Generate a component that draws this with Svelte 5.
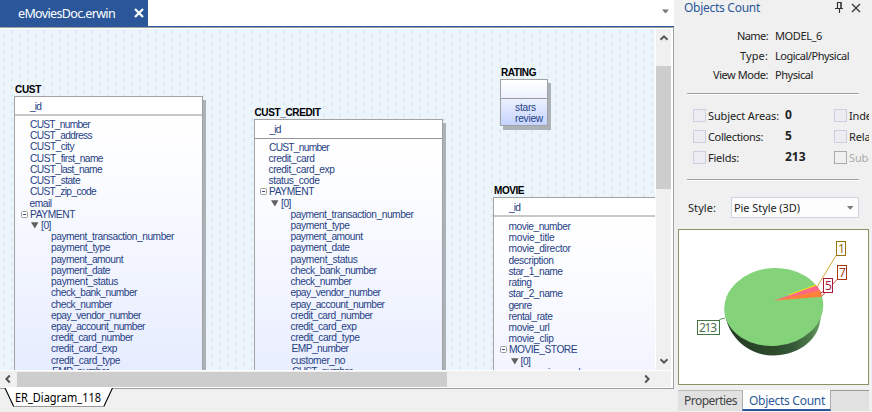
<script>
  // Tightens or loosens letter-spacing so that a label takes its intended width.
  function fit(node, width) {
    node.style.letterSpacing = '0px';
    const natural = node.getBoundingClientRect().width;
    node.style.letterSpacing = (width - natural) / node.textContent.length + 'px';
  }

  const paymentFields = [
    ['payment_transaction_number', 123],
    ['payment_type', 59],
    ['payment_amount', 72],
    ['payment_date', 59],
    ['payment_status', 67],
    ['check_bank_number', 86],
    ['check_number', 61],
    ['epay_vendor_number', 90],
    ['epay_account_number', 94],
    ['credit_card_number', 82],
    ['credit_card_exp', 66],
    ['credit_card_type', 69],
    ['EMP_number', 57, 1]
  ].map(([t, w, dx = 0]) => [t, w, 37 + dx]);

  const entities = [
    {
      name: 'CUST', nameW: 26, x: 14, y: 96, w: 189, first: 22.5, shade: '#c8c8c8', line: 2,
      rows: [
        ['CUST_number', 60, 16], ['CUST_address', 62, 16], ['CUST_city', 44, 16],
        ['CUST_first_name', 73, 16], ['CUST_last_name', 72, 16], ['CUST_state', 50, 16],
        ['CUST_zip_code', 66, 16], ['email', 22, 15.5], ['PAYMENT', 45, 16, 'box'],
        ['[0]', 10, 27, 'tri'], ...paymentFields
      ]
    },
    {
      name: 'CUST_CREDIT', nameW: 66, x: 253.5, y: 118.5, w: 189, first: 22.5, shade: '#959595', line: 1,
      rows: [
        ['CUST_number', 60, 15.5], ['credit_card', 46, 15], ['credit_card_exp', 66, 15],
        ['status_code', 51, 15], ['PAYMENT', 45, 15.5, 'box'], ['[0]', 10, 27.5, 'tri'],
        ...paymentFields, ['customer_no', 54, 37.5], ['CUST_number', 60, 38.5]
      ]
    },
    {
      name: 'MOVIE', nameW: 30, x: 493, y: 197, w: 189, first: 23.5, shade: '#c8c8c8', line: 2,
      rows: [
        ['movie_number', 62, 15.5], ['movie_title', 46, 15.5], ['movie_director', 62, 15.5],
        ['description', 45, 15.5], ['star_1_name', 54, 15.5], ['rating', 23, 15.5],
        ['star_2_name', 54, 15.5], ['genre', 23, 15.5], ['rental_rate', 44, 15.5],
        ['movie_url', 41, 15.5], ['movie_clip', 45, 15.5], ['MOVIE_STORE', 68, 16, 'box'],
        ['[0]', 10, 27.5, 'tri'], ['movie_number', 62, 37]
      ]
    }
  ];

  const info = [
    ['Name:', 31, 'MODEL_6', 47],
    ['Type:', 28, 'Logical/Physical', 74],
    ['View Mode:', 55, 'Physical', 38]
  ];
  const counts = [
    ['Subject Areas:', 71, '0', 'Indexes:', 42],
    ['Collections:', 55, '5', 'Relationships:', 71],
    ['Fields:', 31, '213', 'Sub-Types:', 54]
  ];
</script>

<div class="app">
  <div class="main">
    <div class="tabs">
      <div class="doc">
        <span class="fit" use:fit={97}>eMoviesDoc.erwin</span>
        <svg width="10" height="10" viewBox="0 0 10 10"><path d="M1 1L9 9M9 1L1 9" stroke="#fff" stroke-width="2.2" /></svg>
      </div>
      <svg class="drop" width="9" height="5"><path d="M1 .5h7L4.5 4.5z" fill="#777" /></svg>
    </div>
    <div class="frame">
      <div class="view">
        <div class="canvas">
          {#each entities as e}
            <div class="entity" style="left:{e.x}px;top:{e.y - 29}px;width:{e.w}px">
              <div class="title"><span class="fit" use:fit={e.nameW}>{e.name}</span></div>
              <div class="key" style="border-bottom:{e.line}px solid {e.shade}"><span class="fit" use:fit={11}>_id</span></div>
              <div class="rows" style="padding-top:{e.first - 19.5}px">
                {#each e.rows as [label, width, indent, mark]}
                  <div class="row" style="padding-left:{indent - 1}px">
                    {#if mark === 'box'}
                      <svg class="mark" width="7" height="7"><rect x=".5" y=".5" width="6" height="6" rx="1" fill="#fff" stroke="#9c9c9c" /><path d="M2 3.5h3" stroke="#36487c" /></svg>
                    {:else if mark === 'tri'}
                      <svg class="mark tri" width="8" height="7"><path d="M0 .2h7.4L3.9 6.6z" fill="#606060" /></svg>
                    {/if}
                    <span class="fit" use:fit={width}>{label}</span>
                  </div>
                {/each}
              </div>
            </div>
          {/each}
          <div class="entity small">
            <div class="title"><span class="fit" use:fit={35}>RATING</span></div>
            <div class="key"></div>
            <div class="rows">
              <div class="row"><span class="fit" use:fit={21}>stars</span></div>
              <div class="row"><span class="fit" use:fit={28}>review</span></div>
            </div>
          </div>
        </div>
        <div class="vbar">
          <svg width="10" height="8" viewBox="0 0 10 8"><path d="M1.5 5.8L5 2.4L8.5 5.8" fill="none" stroke="#555" stroke-width="2" /></svg>
          <div class="vthumb"></div>
          <svg width="10" height="8" viewBox="0 0 10 8"><path d="M1.5 2.2L5 5.6L8.5 2.2" fill="none" stroke="#555" stroke-width="2" /></svg>
        </div>
      </div>
      <div class="hbar">
        <svg width="8" height="10" viewBox="0 0 8 10"><path d="M5.8 1.5L2.4 5L5.8 8.5" fill="none" stroke="#555" stroke-width="2" /></svg>
        <div class="hthumb"></div>
        <svg class="right" width="8" height="10" viewBox="0 0 8 10"><path d="M2.2 1.5L5.6 5L2.2 8.5" fill="none" stroke="#555" stroke-width="2" /></svg>
      </div>
    </div>
    <div class="sheet">
      <svg width="120" height="21"><path d="M5 -1L14 18.5H103.5L112.5 -1z" fill="#fff" /><path d="M14 18.5H103.5" stroke="#999" /><path d="M5 0L13.7 18.5M112.5 0L103.8 18.5" stroke="#000" stroke-width="1.1" /><text x="15" y="13.5" textLength="86" lengthAdjust="spacingAndGlyphs">ER_Diagram_118</text></svg>
    </div>
  </div>

  <div class="panel">
    <div class="head">
      <span class="fit" use:fit={76}>Objects Count</span>
      <svg width="26" height="13" viewBox="0 0 26 13"><path d="M2.5 1V7M2.5 1.5H6M0 7.5H8M4.5 8V12" stroke="#333" stroke-width="1.2" fill="none" /><path d="M6 1V7" stroke="#333" stroke-width="1.6" /><path d="M17 3L25 11M25 3L17 11" stroke="#444" stroke-width="1.5" /></svg>
    </div>
    <div class="info">
      {#each info as [k, kw, v, vw]}
        <div class="line"><div class="k"><span class="fit" use:fit={kw}>{k}</span></div><span class="fit" use:fit={vw}>{v}</span></div>
      {/each}
    </div>
    <div class="rule"></div>
    <div class="counts">
      {#each counts as [label, lw, value, other, ow], i}
        <div class="count">
          <i class="cb"></i>
          <div class="lab"><span class="fit" use:fit={lw}>{label}</span></div>
          <b>{value}</b>
          <i class="cb" class:off={i === 2}></i>
          <div class="other" class:dim={i === 2}><span class="fit" use:fit={ow}>{other}</span></div>
        </div>
      {/each}
    </div>
    <div class="rule second"></div>
    <div class="style">
      <div class="sl"><span class="fit" use:fit={28}>Style:</span></div>
      <div class="select"><span class="fit" use:fit={66}>Pie Style (3D)</span><svg width="7" height="4"><path d="M0 0h6.5L3.2 3.8z" fill="#777" /></svg></div>
    </div>
    <div class="chart">
      <svg width="189" height="154" viewBox="679 230 189 154">
        <defs>
          <linearGradient id="side" gradientUnits="userSpaceOnUse" x1="726" y1="0" x2="823" y2="0">
            <stop offset="0" stop-color="#243a24" /><stop offset=".5" stop-color="#2d4b2b" />
            <stop offset=".7" stop-color="#36593a" /><stop offset=".88" stop-color="#4e7d4b" /><stop offset="1" stop-color="#71ae69" />
          </linearGradient>
        </defs>
        <path d="M725 312C727 336 748 355.5 773 355.5C797 355.5 817 341 820 322L823 304z" fill="url(#side)" />
        <ellipse cx="773.7" cy="307" rx="49.6" ry="38.9" transform="rotate(-5 773.7 307)" fill="#84d37b" />
        <path d="M773.7 300.7L816.5 285.6Q819 288 820 291z" fill="#ff6788" />
        <path d="M773.7 300.7L820 290.3Q821.8 293 822 296.8z" fill="#ff8038" />
        <path d="M789 295L816 285" stroke="#ffe000" />
        <path d="M817 287L836 255.5" stroke="#d5ab35" />
        <path d="M821.5 296.5L837 279.5" stroke="#d75a35" />
        <path d="M820 293.5L824 291" stroke="#d04060" />
        <path d="M719.5 319.5L725 318" stroke="#5a9553" />
        <g fill="#fff">
          <rect x="836.5" y="241.5" width="9" height="14" stroke="#98700e" />
          <rect x="837.5" y="265.5" width="9" height="14" stroke="#a7360e" />
          <rect x="823.5" y="278.5" width="9" height="14" stroke="#aa1738" />
          <rect x="697.5" y="320.5" width="22" height="14" stroke="#437540" />
        </g>
        <text x="838" y="252.5" fill="#986c16">1</text>
        <text x="839" y="276.5" fill="#a43a18">7</text>
        <text x="825" y="289.5" fill="#a81c3c">5</text>
        <text x="699" y="331.5" textLength="18" fill="#4f704c">213</text>
      </svg>
    </div>
    <div class="ptabs">
      <div class="pt"><span class="fit" use:fit={53}>Properties</span></div>
      <div class="pt on"><span class="fit" use:fit={76}>Objects Count</span></div>
      <div class="rest"></div>
    </div>
  </div>
</div>

<style>
  .app { display: flex; width: 872px; height: 412px; overflow: hidden; background: #f0f0f0; font-family: 'Noto Sans', 'Open Sans', sans-serif; font-size: 12px; color: #222; }
  .app * { box-sizing: border-box; }
  svg { display: block; flex: none; }
  .fit { display: inline-block; white-space: nowrap; flex: none; }
  .main { width: 674px; flex: none; display: flex; flex-direction: column; }
  .tabs { height: 27px; background: #fff; border-bottom: 1px solid #2b579a; display: flex; align-items: flex-start; justify-content: space-between; flex: none; }
  .doc { width: 148px; height: 27px; background: #2b579a; color: #fff; display: flex; align-items: center; justify-content: space-between; padding: 0 4px 1px 18px; font-size: 12.5px; }
  .drop { margin: 9px 4px 0 0; }
  .frame { height: 362px; flex: none; border: 1px solid #a0a0a0; border-left: 0; background: #fff; padding-top: 1px; }
  .view { display: flex; height: 341px; }
  .canvas {
    position: relative; width: 655px; height: 341px; flex: none; overflow: hidden; background-color: #edf5fc;
    background-image: url("data:image/svg+xml,%3Csvg xmlns='http://www.w3.org/2000/svg' width='16' height='8'%3E%3Cpath fill='%23d3dde6' d='M11 1h1v1h-1zM12 2h1v1h-1zM11 3h1v1h-1zM4 5h1v1h-1zM3 6h1v1h-1zM4 7h1v1h-1z'/%3E%3C/svg%3E");
  }
  .entity {
    position: absolute; border: 1px solid #a2a2a2; box-shadow: 3px 4px 0 #abb3b9;
    font: 10.2px/11.225px 'Liberation Sans', Arial, sans-serif; color: #273f84;
    background: linear-gradient(#fff 18px, #fcfdff 60px, #f2f5ff 170px, #e6ecff 275px);
    height: 310px;
  }
  .title { position: absolute; left: 0; top: -13px; height: 12px; color: #000; font-weight: bold; font-size: 10px; display: flex; }
  .key { height: 19px; border-bottom: 1px solid #c8c8c8; padding: 4px 0 0 15px; display: flex; background: #fff; }
  .row { height: 11.225px; display: flex; }
  .mark { margin: 2px 2px 0 -9px; }
  .tri { margin-left: -10px; }
  .small { left: 500px; top: 50px; width: 48px; height: 47px; background: linear-gradient(#fff, #eaf0ff 20px, #c6d4ff); }
  .small .key { background: none; border-color: #999; }
  .small .rows { padding: 3px 0 0 14px; }
  .vbar { width: 15px; margin-left: 1px; background: #f0f0f0; display: flex; flex-direction: column; align-items: center; padding: 5px 0 5px; justify-content: space-between; }
  .vthumb { width: 15px; height: 123px; background: #cdcdcd; margin: 24px 0 auto; }
  .hbar { height: 16px; width: 671px; margin-top: 1px; background: #f0f0f0; display: flex; align-items: center; padding-left: 4px; }
  .hthumb { width: 430px; height: 15px; background: #cdcdcd; margin-left: 5px; }
  .right { margin-left: 196px; }
  .sheet svg { overflow: hidden; margin-top: -1px; }
  .sheet text { font: 12px 'Noto Sans', sans-serif; fill: #000; }
  .panel { width: 195px; padding-left: 4px; flex: none; overflow: hidden; }
  .head { height: 17px; display: flex; justify-content: space-between; padding: 0 8px 0 6px; color: #2b579a; line-height: 16px; }
  .head svg { margin-top: 1px; }
  .info { margin-top: 9px; font-size: 11px; }
  .line { display: flex; height: 19.5px; line-height: 20px; gap: 7px; }
  .k { width: 90px; display: flex; justify-content: flex-end; }
  .rule { height: 2px; margin: 8px 10px 0 9px; background: linear-gradient(#a0a0a0 50%, #fff 50%); }
  .counts { margin-top: 10px; font-size: 11px; }
  .count { display: flex; height: 21px; align-items: center; line-height: 20px; }
  .cb { width: 13px; height: 13px; border: 1px solid #cfcde0; background: #edecf2; margin-left: 15px; flex: none; }
  .lab { width: 77px; padding: 1px 0 0 2px; display: flex; flex: none; }
  .count b { width: 32px; padding-left: 2px; font-size: 12px; margin-top: -1px; flex: none; }
  .count b + .cb { margin-left: 19px; }
  .count .off { border-color: #aaa; background: #f0f0f0; }
  .other { padding: 1px 0 0 2px; display: flex; }
  .dim { color: #aaa; }
  .rule.second { margin-top: 11px; }
  .style { display: flex; align-items: center; height: 22px; margin-top: 16px; font-size: 11px; }
  .sl { width: 53px; padding-left: 10px; display: flex; }
  .select { width: 128px; height: 21px; border: 1px solid #d4d2e2; background: #fdfdfe; display: flex; align-items: center; justify-content: space-between; padding: 0 4px 0 2px; }
  .chart { margin-top: 10px; width: 191px; height: 156px; border: 1px solid #849463; background: #fff; }
  .chart text { font: 12px 'Noto Sans', sans-serif; }
  .ptabs { display: flex; margin-top: 5px; height: 21px; width: 191px; font-size: 12px; line-height: 19px; color: #444; }
  .pt { width: 64px; padding-left: 6px; background: #e1e1e1; border-top: 1px solid #bbb; display: flex; }
  .pt.on { width: 89px; padding: 1px 0 0 6px; background: #fff; color: #2b579a; border: 1px solid #aaa; border-top: 0; border-bottom: 2px solid #2b579a; }
  .rest { flex: 1; background: #e1e1e1; border-top: 1px solid #999; }
</style>
